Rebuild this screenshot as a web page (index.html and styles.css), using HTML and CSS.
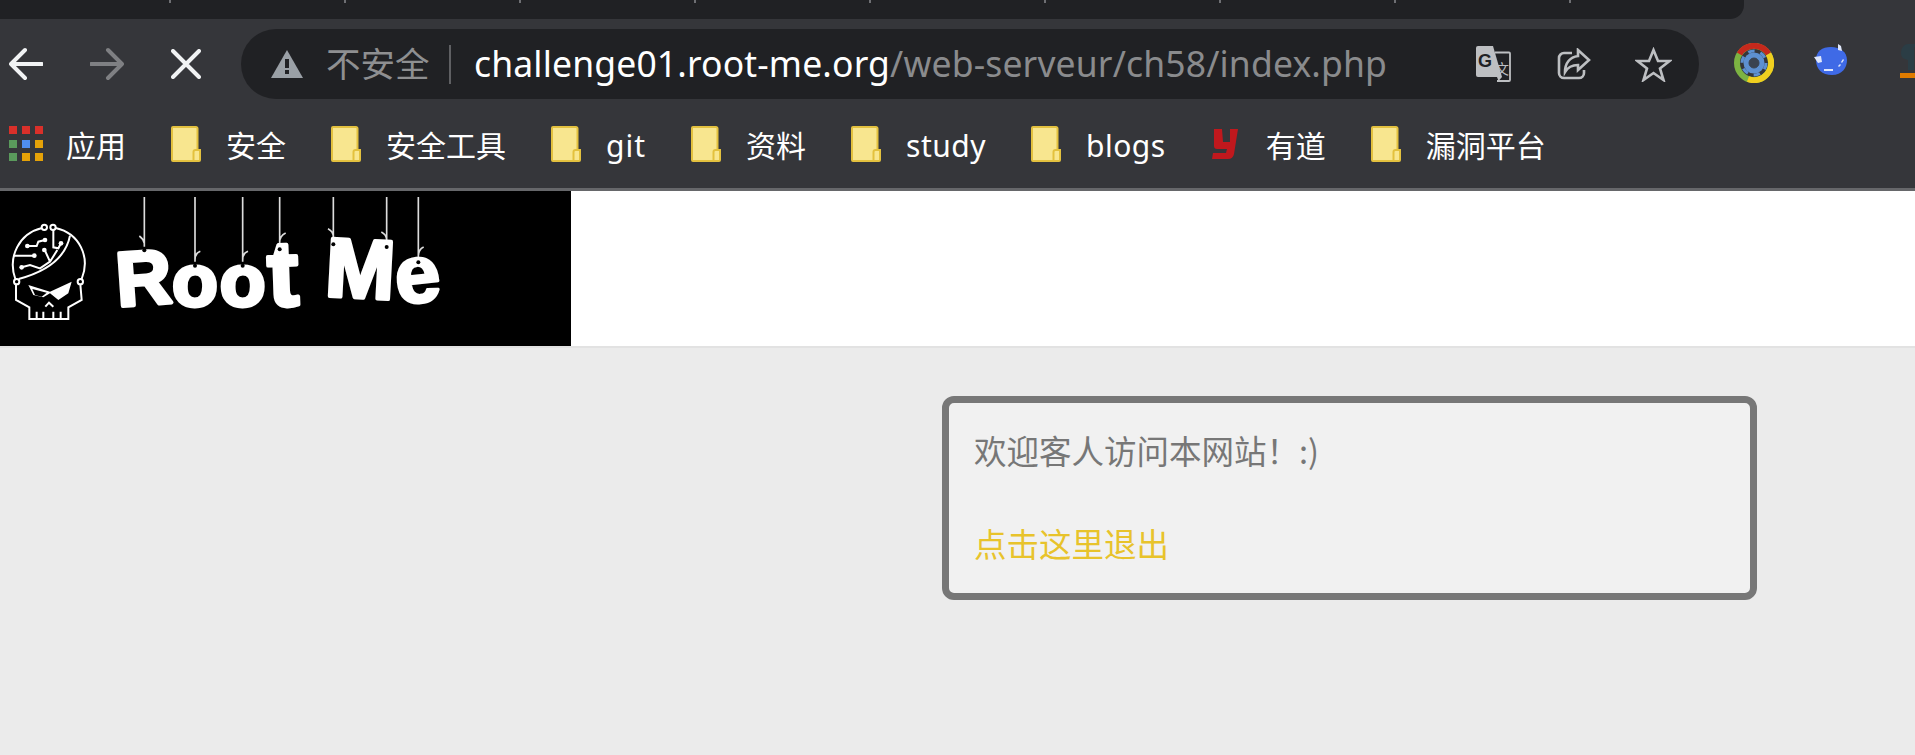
FILE: index.html
```html
<!DOCTYPE html>
<html lang="zh-CN">
<head>
<meta charset="utf-8">
<title>Root Me</title>
<link rel="stylesheet" href="styles.css">
</head>
<body>
<div class="browser">
  <div class="tabstrip">
    <div class="tabs">
      <span class="tick"></span><span class="tick"></span><span class="tick"></span><span class="tick"></span><span class="tick"></span><span class="tick"></span><span class="tick"></span><span class="tick"></span><span class="tick"></span>
    </div>
  </div>
  <div class="toolbar">
    <svg class="nav" viewBox="0 0 34 34"><path d="M33 17H2M16 3 2 17l14 14" class="line-light"/></svg>
    <svg class="nav" viewBox="0 0 34 34"><path d="M1 17h31M18 3l14 14-14 14" class="line-dim"/></svg>
    <svg class="nav-x" viewBox="0 0 30 30"><path d="M2 2l26 26M28 2 2 28" class="line-light"/></svg>
    <div class="omnibox">
      <svg class="warn" viewBox="0 0 32 28"><path d="M16 0 32 28H0Z" class="warn-fill"/><rect x="14" y="9" width="4" height="9" class="warn-cut"/><rect x="14" y="20" width="4" height="4" class="warn-cut"/></svg>
      <span class="insecure">不安全</span>
      <span class="sep"></span>
      <span class="url"><span class="host">challenge01.root-me.org</span>/web-serveur/ch58/index.php</span>
      <div class="actions">
        <svg class="act-translate" viewBox="0 0 35 36">
          <path d="M19 6.500h14a1 1 0 0 1 1 1V34a1 1 0 0 1-1 1H21" class="tr-line"/>
          <path d="M2 0h15l9 31H2a2 2 0 0 1-2-2V2a2 2 0 0 1 2-2Z" class="tr-back"/>
          <path d="M21 31l1.500 4 3.500-4Z" class="tr-back"/>
          <text x="2" y="21" class="tr-g">G</text>
          <text x="19" y="28" class="tr-x">文</text>
        </svg>
        <svg class="act-share" viewBox="0 0 34 32">
          <path d="M15 5H7a5 5 0 0 0-5 5v15a5 5 0 0 0 5 5h15a5 5 0 0 0 5-5v-3" class="line-icon"/>
          <path d="M21 2l11 10-11 10v-5c-6 0-10 2-13 7 0-9 5-15 13-16Z" class="line-icon"/>
        </svg>
        <svg class="act-star" viewBox="0 0 37 35"><path d="M18.500 3 23 14h11.500l-9.500 7.500L28.500 33l-10-7-10 7 3.500-11.500L2.500 14H14Z" class="line-icon"/></svg>
      </div>
    </div>
    <svg class="ext-chrome" viewBox="0 0 40 40">
      <circle cx="20" cy="20" r="17" class="ring-green"/>
      <path d="M5.500 11A17 17 0 0 1 34.500 11" class="ring-red"/>
      <path d="M34.500 11A17 17 0 0 1 14 36" class="ring-yellow"/>
      <circle cx="20" cy="20" r="10.500" class="gear"/>
      <circle cx="20" cy="20" r="12" class="gear-teeth"/>
      <circle cx="20" cy="20" r="5" class="gear-hole"/>
    </svg>
    <svg class="ext-blob" viewBox="0 0 34 32">
      <path d="M17 3c9 0 16 5 16 13S28 31 18 31 2 25 2 16 8 3 17 3Z" class="blob"/>
      <path d="M24 0l3 2 1 5-4-1ZM0 13l7-1 1 6-4 1ZM10 25h9v2h-9ZM27 18l2-3 1 1-2 3ZM24 22l2-2 1 1-2 2Z" class="blob-mark"/>
    </svg>
    <svg class="ext-third" viewBox="0 0 40 34">
      <path d="M8 0H40V3H14V26H8V16C3 15 1 13 1 9 1 4 4 0 8 0Z" class="third-dark"/>
      <rect x="0" y="29" width="40" height="5" class="third-bar"/>
    </svg>
  </div>
  <div class="bookmarks">
    <div class="bm bm-apps">
      <span class="apps"><i class="r"></i><i class="r"></i><i class="r"></i><i class="g"></i><i class="b"></i><i class="y"></i><i class="g"></i><i class="y"></i><i class="y"></i></span>
      <span class="bm-label">应用</span>
    </div>
    <div class="bm"><svg class="folder" viewBox="0 0 30 36"><use href="#f"/></svg><span class="bm-label">安全</span></div>
    <div class="bm"><svg class="folder" viewBox="0 0 30 36"><use href="#f"/></svg><span class="bm-label">安全工具</span></div>
    <div class="bm"><svg class="folder" viewBox="0 0 30 36"><use href="#f"/></svg><span class="bm-label bm-git">git</span></div>
    <div class="bm"><svg class="folder" viewBox="0 0 30 36"><use href="#f"/></svg><span class="bm-label">资料</span></div>
    <div class="bm"><svg class="folder" viewBox="0 0 30 36"><use href="#f"/></svg><span class="bm-label bm-latin">study</span></div>
    <div class="bm"><svg class="folder" viewBox="0 0 30 36"><use href="#f"/></svg><span class="bm-label bm-latin">blogs</span></div>
    <div class="bm"><svg class="folder" viewBox="0 0 30 36"><path d="M3 3h8l1 13h7V3h8l-4 25q-1 5-6 5H1l1-6h13l1-4H6q-3 0-3-3Z" class="youdao"/></svg><span class="bm-label">有道</span></div>
    <div class="bm"><svg class="folder" viewBox="0 0 30 36"><use href="#f"/></svg><span class="bm-label">漏洞平台</span></div>
  </div>
</div>
<svg class="defs" width="0" height="0">
  <defs>
    <g id="f">
      <path d="M2 1h23a1.500 1.500 0 0 1 1.500 1.500V24H29v10a1 1 0 0 1-1 1H2a1 1 0 0 1-1-1V2a1 1 0 0 1 1-1Z" class="folder-body"/>
      <path d="M26.500 24h-2a2 2 0 0 0-2 2v9" class="folder-flap"/>
    </g>
  </defs>
</svg>
<header class="site-header">
  <svg class="logo" viewBox="0 0 1713 465">
    <g transform="translate(0,-18)">
      <g class="strings">
        <path d="M433 36V185M433 175c-2-10-8-17-15-22"/>
        <path d="M585 36V230M585 225c0-12 5-22 16-26"/>
        <path d="M728 36V230M728 225c0-12 5-22 16-26"/>
        <path d="M839 36V178M839 172c0-12 6-22 18-28"/>
        <path d="M1000 36V160M1000 156c0-12-6-20-16-25"/>
        <path d="M1160 36V170M1160 166c0-12-6-20-16-25"/>
        <path d="M1255 36V218M1255 214c0-14 3-22 16-28"/>
      </g>
      <text class="letters letter-r" x="432" y="358" transform="rotate(-4 432 300)">R</text>
      <text class="letters letter-o" x="585" y="364">o</text>
      <text class="letters letter-o" x="728" y="364">o</text>
      <text class="letters letter-t" x="850" y="362" transform="rotate(-2 850 300)">t</text>
      <text class="letters" x="1080" y="338" transform="rotate(3 1080 270)">M</text>
      <text class="letters letter-e" x="1255" y="352" transform="rotate(-6 1255 300)">e</text>
      <circle cx="433" cy="196" r="6" class="hole"/>
      <circle cx="585" cy="242" r="6" class="hole"/>
      <circle cx="728" cy="242" r="6" class="hole"/>
      <circle cx="839" cy="193" r="6" class="hole"/>
      <circle cx="1000" cy="178" r="6" class="hole"/>
      <circle cx="1160" cy="186" r="6" class="hole"/>
      <circle cx="1255" cy="232" r="6" class="hole"/>
      <g class="skull">
        <path d="M46 282C22 215 58 145 126 129M167 129C238 145 272 215 245 282"/>
        <path d="M56 282C130 262 196 225 210 152"/>
        <path d="M48 298V345L88 367V402H205V367L245 345L241 298"/>
        <path d="M110 380V402M130 380V402M160 380V402M182 380V402"/>
        <circle cx="133" cy="127" r="8"/><circle cx="159" cy="127" r="8"/>
        <circle cx="50" cy="290" r="8"/><circle cx="241" cy="290" r="8"/>
        <path d="M82 183H110L115 170L135 165M40 212H103M65 247L90 240L120 250L150 230L135 197M160 135V187L175 190L183 175M150 230L172 195"/>
        <path d="M136 365L147 353L160 365"/>
      </g>
      <g class="skull-fill">
        <circle cx="82" cy="183" r="7"/><circle cx="135" cy="165" r="7"/><circle cx="133" cy="195" r="7"/>
        <circle cx="183" cy="175" r="7"/><circle cx="103" cy="212" r="7"/><circle cx="65" cy="247" r="7"/>
        <path d="M85 300L150 320L215 290L205 325L175 345L150 325L130 337L100 330L90 310Z"/>
      </g>
      <path d="M97 312L140 323L125 335L105 330Z" class="skull-eye"/>
    </g>
  </svg>
</header>
<main class="page">
  <div class="notice">
    欢迎客人访问本网站！:)<br><br>
    <a class="logout" href="#">点击这里退出</a>
  </div>
</main>
</body>
</html>
```
FILE: styles.css
```css
* { box-sizing: border-box; }
html, body { margin: 0; height: 100%; }
body {
  background: #ebebeb;
  overflow: hidden;
  font-family: "Noto Sans", "Noto Sans CJK SC", sans-serif;
  width: 1915px;
  height: 755px;
}
.browser { background: #35363a; border-bottom: 3px solid #66676a; }
.tabstrip { height: 19px; }
.tabs {
  width: 1744px;
  height: 19px;
  background: #202124;
  border-bottom-right-radius: 14px;
  display: flex;
  gap: 173px;
  padding-left: 169px;
}
.tick { width: 2px; height: 3px; background: #6e6f73; }
.toolbar {
  height: 80px;
  padding: 10px 0 0 9px;
  display: flex;
  align-items: flex-start;
}
.toolbar > svg { flex: none; }
.nav { width: 34px; height: 34px; margin-top: 18px; margin-right: 47px; }
.nav-x { width: 30px; height: 30px; margin-top: 20px; margin-right: 40px; }
.line-light { fill: none; stroke: #f1f3f4; stroke-width: 4; stroke-linecap: round; stroke-linejoin: round; }
.line-dim { fill: none; stroke: #7f8083; stroke-width: 4; stroke-linecap: round; stroke-linejoin: round; }
.omnibox {
  width: 1458px;
  height: 70px;
  flex: none;
  background: #202124;
  border-radius: 35px;
  display: flex;
  align-items: center;
  padding: 0 27px 0 30px;
  color: #8a8b8d;
}
.warn { width: 32px; height: 28px; margin-right: 23px; flex: none; }
.warn-fill { fill: #9aa0a6; }
.warn-cut { fill: #202124; }
.insecure { width: 105px; font-size: 34.500px; flex: none; line-height: 1; white-space: nowrap; color: #8e8f91; }
.sep { width: 2px; height: 39px; background: #5f6063; margin: 0 23px 0 18px; flex: none; }
.url { white-space: nowrap; font-size: 35.500px; line-height: 1; letter-spacing: 0.150px; }
.host { color: #fff; }
.actions { margin-left: auto; display: flex; align-items: center; }
.act-translate { width: 35px; height: 36px; margin-right: 46px; }
.act-share { width: 34px; height: 32px; margin-right: 44px; }
.act-star { width: 37px; height: 35px; }
.line-icon { fill: none; stroke: #bdbfc2; stroke-width: 2.600; stroke-linejoin: miter; }
.tr-back { fill: #bdbfc2; }
.tr-line { fill: #202124; stroke: #bdbfc2; stroke-width: 1.800; }
.tr-g { font-family: "Liberation Sans", sans-serif; font-weight: 700; font-size: 18px; fill: #202124; }
.tr-x { font-family: "Noto Sans CJK SC", sans-serif; font-size: 14px; fill: #bdbfc2; }
.ext-chrome { width: 40px; height: 40px; margin: 14px 40px 0 35px; }
.ring-green { fill: none; stroke: #7cb342; stroke-width: 6; }
.ring-red { fill: none; stroke: #c5291c; stroke-width: 6; }
.ring-yellow { fill: none; stroke: #f0cf1f; stroke-width: 6; }
.gear { fill: #5d90d0; }
.gear-teeth { fill: none; stroke: #5d90d0; stroke-width: 3; stroke-dasharray: 6.500 6.070; }
.gear-hole { fill: #3a4350; stroke: #3a4350; stroke-width: 1; }
.ext-blob { width: 34px; height: 32px; margin: 15px 52px 0 0; }
.blob { fill: #3f6ae6; }
.blob-mark { fill: #dfe7fb; }
.ext-third { width: 40px; height: 34px; margin-top: 15px; }
.third-dark { fill: #2b3d45; }
.third-bar { fill: #e07b00; }
.bookmarks {
  height: 89px;
  display: flex;
  align-items: center;
  gap: 45px;
  padding-left: 9px;
  color: #fff;
  font-size: 30px;
  line-height: 1;
  white-space: nowrap;
}
.bm { display: flex; align-items: center; gap: 25px; }
.bm-apps { gap: 23px; }
.bm-label { padding-top: 4px; }
.bm-latin { letter-spacing: 0.500px; }
.bm-git { min-width: 40px; letter-spacing: 1px; }
.apps {
  width: 34px;
  height: 35px;
  display: grid;
  grid-template-columns: repeat(3, 8px);
  grid-template-rows: repeat(3, 8px);
  justify-content: space-between;
  align-content: space-between;
}
.apps i { display: block; }
.apps .r { background: #d9302a; }
.apps .g { background: #5a9a5c; }
.apps .b { background: #4f8ef0; }
.apps .y { background: #e5a208; }
.folder { width: 30px; height: 36px; flex: none; }
.folder-body { fill: #f8e68f; stroke: #e3c13f; stroke-width: 2; }
.folder-flap { fill: none; stroke: #e3c13f; stroke-width: 2; }
.youdao { fill: #c0181d; }
.defs { position: absolute; }
.site-header {
  height: 157px;
  background: #fff;
  border-bottom: 2px solid #e2e2e2;
}
.logo { display: block; width: 571px; height: 155px; background: #000; }
.strings path { fill: none; stroke: #dcdcdc; stroke-width: 5; }
.letters {
  font-family: "Liberation Sans", sans-serif;
  font-weight: 700;
  font-size: 250px;
  text-anchor: middle;
  fill: #fff;
  stroke: #fff;
  stroke-width: 12;
  stroke-linejoin: round;
}
.letter-r { font-size: 230px; }
.letter-o { font-size: 225px; }
.letter-t { font-size: 280px; }
.letter-e { font-size: 245px; stroke-width: 9; }
.hole { fill: #000; }
.skull circle, .skull path { fill: none; stroke: #fff; stroke-width: 6; }
.skull-fill { fill: #fff; }
.skull-eye { fill: #000; }
.page { padding: 48px 0 0 942px; }
.notice {
  width: 815px;
  height: 204px;
  border: 7px solid #777;
  border-radius: 12px;
  background: #f1f1f1;
  padding: 24px 0 0 25px;
  font-family: "Noto Sans CJK SC", sans-serif;
  font-size: 32.500px;
  line-height: 46.500px;
  color: #777;
}
.logout { color: #e8c32b; text-decoration: none; }
```
